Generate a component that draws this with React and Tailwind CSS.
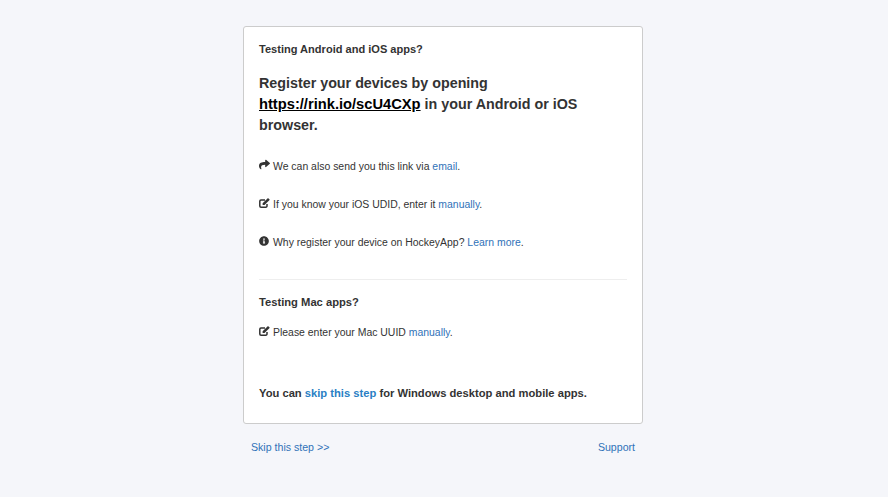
import { FaShare, FaInfoCircle } from 'react-icons/fa'

// FA4 style pencil-square, the package only has the thin FA5 one
const EditIcon = () => (
  <svg width="11" height="10" viewBox="0 0 11 10" className="-mt-[4px]" fill="none">
    <path d="M8 6v1.8A1.2 1.2 0 0 1 6.8 9.2H2A1.2 1.2 0 0 1 .8 8V3.2A1.2 1.2 0 0 1 2 2h4" stroke="currentColor" strokeWidth="1.5" />
    <path d="M3.6 5.2 9 0l1.8 1.8-5.3 5.2H3.6z" fill="currentColor" />
  </svg>
)

const Row = ({ icon, className, children }) => (
  <p className={`flex items-center h-[18px] text-[10.45px] text-[#333] ${className}`}>
    <span className="w-[14px] shrink-0 text-[#333]">{icon}</span>
    <span>{children}</span>
  </p>
)

const A = ({ children, className = 'text-[#3072b8]' }) => <a className={className}>{children}</a>

const App = () => {
  return (
    <div className="min-h-[497px] bg-[#f5f6fa] pt-[26px] font-['Liberation_Sans',Arial,sans-serif]">
      <div className="w-[400px] ml-[243px]">
        {/* Card */}
        <div className="h-[398px] bg-white border border-[#cccccc] rounded-[3px] px-[15px] pt-[13px]">
          <h4 className="text-[11.05px] leading-[18px] font-bold text-[#333]">Testing Android and iOS apps?</h4>
          <h2 className="mt-[15px] text-[14.3px] leading-[21px] font-bold text-[#333]">
            Register your devices by opening <a className="text-[14.7px] text-black underline">https://rink.io/scU4CXp</a> in your Android or iOS browser.
          </h2>

          <Row className="mt-[22px]" icon={<FaShare size={11} className="-mt-[6px]" />}>
            We can also send you this link via <A>email</A>.
          </Row>
          <Row className="mt-[20px]" icon={<EditIcon />}>
            If you know your iOS UDID, enter it <A>manually</A>.
          </Row>
          <Row className="mt-[20px]" icon={<FaInfoCircle size={10} className="-mt-[4px]" />}>
            Why register your device on HockeyApp? <A>Learn more</A>.
          </Row>

          <hr className="mt-[27px] border-[#eeeeee]" />

          <h4 className="mt-[13px] text-[11.2px] leading-[18px] font-bold text-[#333]">Testing Mac apps?</h4>
          <Row className="mt-[13px]" icon={<EditIcon />}>
            Please enter your Mac UUID <A>manually</A>.
          </Row>

          <p className="mt-[42px] text-[11.2px] leading-[18px] font-bold text-[#333]">
            You can <A className="text-[#2a7fc4]">skip this step</A> for Windows desktop and mobile apps.
          </p>
        </div>

        {/* Footer links */}
        <div className="flex justify-between px-2 mt-[14px] text-[10.6px] leading-[18px]">
          <A>Skip this step &gt;&gt;</A>
          <A>Support</A>
        </div>
      </div>
    </div>
  )
}

export default App
